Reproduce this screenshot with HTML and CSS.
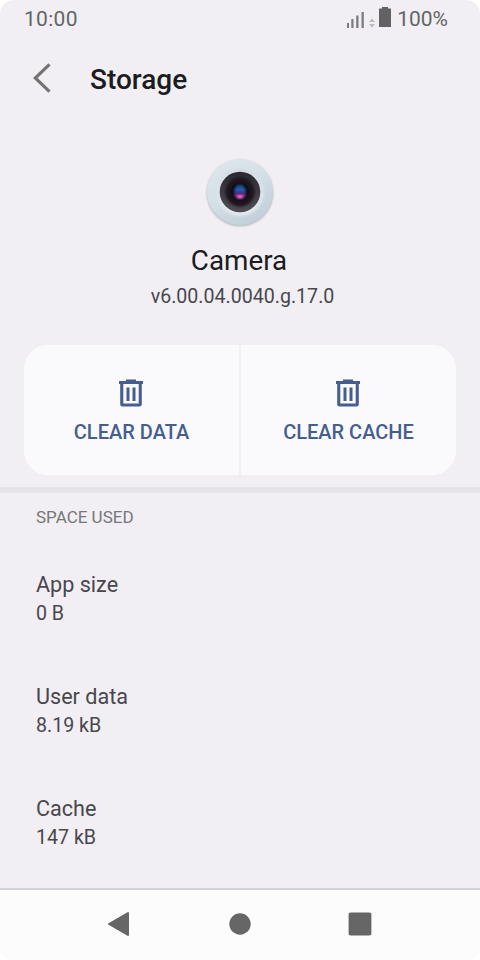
FILE: index.html
```html
<!DOCTYPE html>
<html lang="en">
<head>
<meta charset="utf-8">
<title>Storage</title>
<link rel="stylesheet" href="styles.css">
</head>
<body>
<div class="screen">
  <div class="status">
    <span class="time">10:00</span>
    <svg class="status-icons" width="46" height="22" viewBox="0 0 46 22">
      <path fill="#7b7b7d" d="M1 17h2v5H1zM5.300 13h2.200v9H5.300zM10.200 9.500h2.300V22h-2.300zM15.500 6h2.300v16h-2.300z"/>
      <path fill="#bdbbbe" d="M26 12.500l3 3.500h-6zM26 21.500l3-3.500h-6z"/>
      <path fill="#626264" d="M36 1h6v1.500h2.500q.5 0 .5.500v17.500q0 .5-.5.500h-11q-.5 0-.5-.500V3q0-.5.5-.500H36z"/>
    </svg>
    <span class="percent">100%</span>
  </div>
  <header class="toolbar">
    <svg class="back" width="18" height="30" viewBox="0 0 18 30"><path d="M16.500 1.300L2.300 15l14.200 13.700" fill="none" stroke="#747475" stroke-width="3.200"/></svg>
    <h1 class="title">Storage</h1>
  </header>
  <section class="app">
    <svg class="camera" width="72" height="72" viewBox="0 0 72 72">
      <defs>
        <linearGradient id="shell" x1="0" y1="0" x2=".6" y2="1"><stop offset="0" stop-color="#dfe9ee"/><stop offset=".5" stop-color="#d5e0e7"/><stop offset="1" stop-color="#c3d0d9"/></linearGradient>
        <linearGradient id="rim" x1="0" y1="0" x2="0" y2="1"><stop offset="0" stop-color="#d3dde3"/><stop offset="1" stop-color="#e0e9ee"/></linearGradient>
        <linearGradient id="barrel" x1="0" y1="0" x2="0" y2="1"><stop offset="0" stop-color="#2b2930"/><stop offset="1" stop-color="#504d57"/></linearGradient>
        <linearGradient id="glass" x1="0" y1="0" x2="0" y2="1"><stop offset="0" stop-color="#173b70"/><stop offset=".38" stop-color="#2467bd"/><stop offset=".58" stop-color="#3c1d64"/><stop offset=".8" stop-color="#cc48b8"/><stop offset="1" stop-color="#4d174c"/></linearGradient>
        <filter id="soft"><feGaussianBlur stdDeviation=".9"/></filter>
      </defs>
      <circle cx="36" cy="37" r="33" fill="#a9aeb5" filter="url(#soft)"/>
      <circle cx="36" cy="36" r="33" fill="url(#shell)"/>
      <circle cx="36" cy="36" r="24" fill="url(#rim)" filter="url(#soft)"/>
      <circle cx="36" cy="36" r="20.300" fill="url(#barrel)"/>
      <circle cx="36" cy="36" r="14.500" fill="#1b191f" filter="url(#soft)"/>
      <circle cx="36" cy="36" r="9.500" fill="#100e19"/>
      <ellipse cx="36" cy="36" rx="5.800" ry="7.500" fill="url(#glass)" filter="url(#soft)"/>
      <ellipse cx="36" cy="40.800" rx="2" ry="1.200" fill="#ef8be3" filter="url(#soft)"/>
    </svg>
    <div class="name">Camera</div>
    <div class="version">v6.00.04.0040.g.17.0</div>
  </section>
  <div class="actions">
    <div class="action">
      <svg class="trash" width="24" height="28" viewBox="0 0 24 28"><path fill="#455e8f" fill-rule="evenodd" d="M7 .500h10V2h7v3h-1.200v20q0 2.500-2.500 2.500H3.700Q1.200 27.500 1.200 25V5H0V2h7zM4.300 5v19.500h15.400V5zM7.500 8.500h3v13.500h-3zM13.500 8.500h3v13.500h-3z"/></svg>
      <span class="label">CLEAR DATA</span>
    </div>
    <div class="action">
      <svg class="trash" width="24" height="28" viewBox="0 0 24 28"><path fill="#455e8f" fill-rule="evenodd" d="M7 .500h10V2h7v3h-1.200v20q0 2.500-2.500 2.500H3.700Q1.200 27.500 1.200 25V5H0V2h7zM4.300 5v19.500h15.400V5zM7.500 8.500h3v13.500h-3zM13.500 8.500h3v13.500h-3z"/></svg>
      <span class="label">CLEAR CACHE</span>
    </div>
  </div>
  <section class="usage">
    <h2 class="heading">SPACE USED</h2>
    <div class="item"><div class="key">App size</div><div class="value">0 B</div></div>
    <div class="item"><div class="key">User data</div><div class="value">8.19 kB</div></div>
    <div class="item"><div class="key">Cache</div><div class="value">147 kB</div></div>
  </section>
  <nav class="nav">
    <svg width="24" height="26" viewBox="0 0 24 26"><path d="M1 13L20 2v22z" fill="#666" stroke="#666" stroke-width="2" stroke-linejoin="round"/></svg>
    <svg width="24" height="26" viewBox="0 0 24 26"><circle cx="12" cy="13" r="10.700" fill="#666"/></svg>
    <svg width="24" height="26" viewBox="0 0 24 26"><rect x=".600" y="1.600" width="22.800" height="22.800" rx="2" fill="#666"/></svg>
  </nav>
</div>
</body>
</html>
```

FILE: styles.css
```css
body {
  margin: 0;
  background: #fff;
  font-family: Roboto, "Liberation Sans", sans-serif;
}
.screen {
  display: grid;
  grid-template-rows: 38px 82px 225px 142px 401px 72px;
  height: 960px;
  overflow: hidden;
  border-radius: 14px;
  background: #f1eff3;
}
.status {
  display: flex;
  padding: 6px 32px 0 24px;
  color: #646466;
  font-size: 21px;
  line-height: 26px;
}
.time { letter-spacing: 0.3px; }
.status-icons { margin-left: auto; }
.percent { margin-left: 5px; }
.toolbar {
  display: flex;
  align-items: center;
  padding-left: 33px;
}
.back { margin-bottom: 2px; }
.title {
  margin: 2px 0 0 39px;
  color: #1b1b20;
  font-size: 28px;
  font-weight: 500;
  line-height: 36px;
}
.app {
  display: flex;
  flex-direction: column;
  align-items: center;
  padding-top: 36px;
}
.name {
  margin-top: 15px;
  padding-right: 2px;
  color: #1b1b20;
  font-size: 27.8px;
  line-height: 36px;
}
.version {
  margin: 4px 0 0 5px;
  color: #48474e;
  font-size: 19.6px;
  line-height: 28px;
}
.actions {
  display: grid;
  grid-template-columns: 1fr 1fr;
  gap: 2px;
  height: 130px;
  margin: 0 24px;
  overflow: hidden;
  border-radius: 24px;
}
.action {
  display: flex;
  flex-direction: column;
  align-items: center;
  padding-top: 34px;
  background: #fafafd;
}
.trash { margin-right: 1px; }
.label {
  margin-top: 11px;
  color: #455e8f;
  font-size: 20px;
  font-weight: 500;
  line-height: 28px;
}
.usage {
  min-height: 0;
  padding: 17px 36px 0;
  overflow: hidden;
  border-top: 6px solid #e5e3e7;
}
.heading {
  margin: 0 0 46px;
  color: #77767a;
  font-size: 17px;
  font-weight: 400;
  line-height: 14px;
}
.item {
  height: 112px;
  color: #48474e;
}
.key { font-size: 21.6px; line-height: 29px; }
.value { font-size: 19.6px; line-height: 30px; }
.nav {
  display: flex;
  justify-content: center;
  gap: 96px;
  padding-top: 21px;
  border-top: 2px solid #d4d2d7;
  background: #fcfcfc;
}
```
